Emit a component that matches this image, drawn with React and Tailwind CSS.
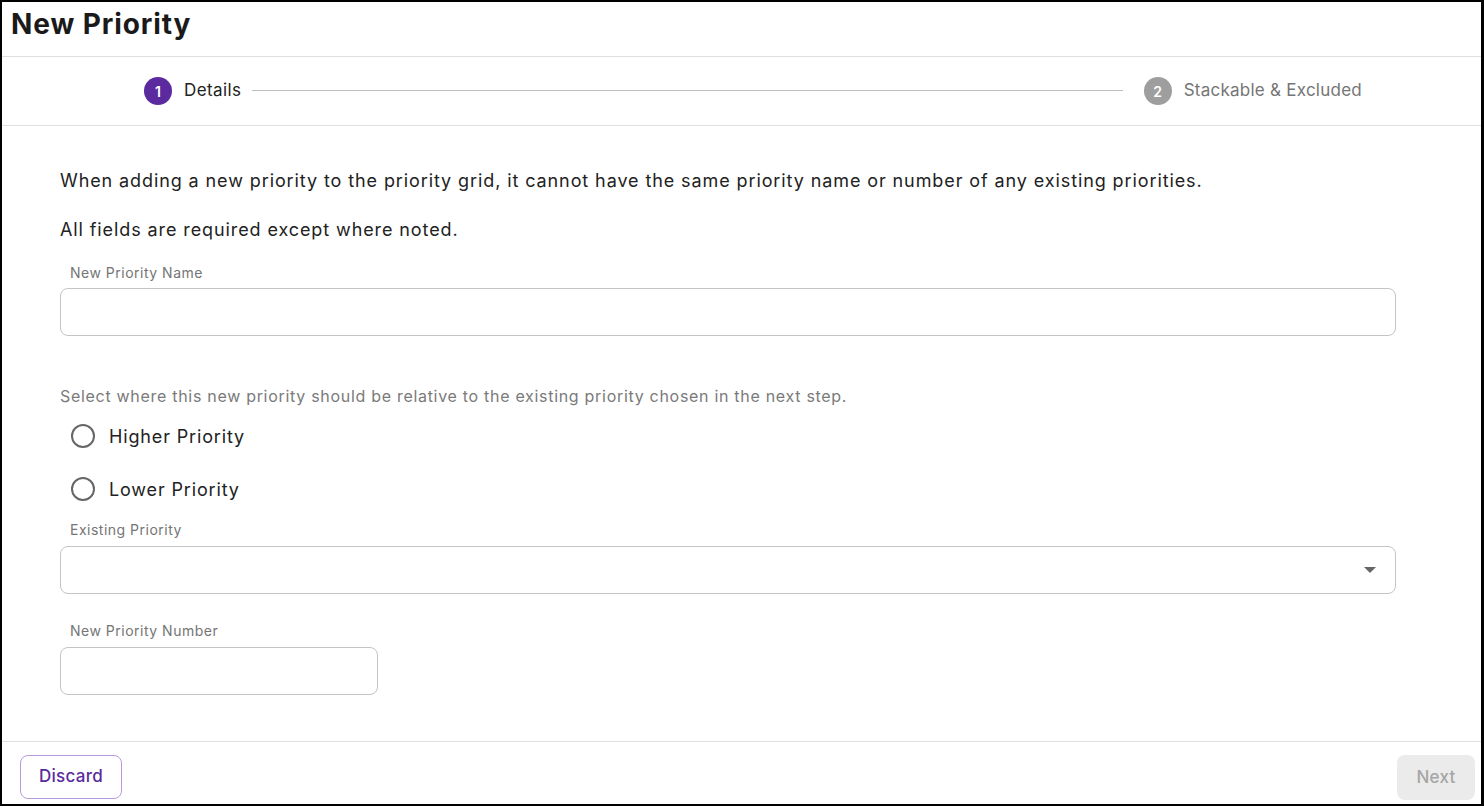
import React, { useState } from 'react';

const FONT = { fontFamily: 'Inter, "Noto Sans", sans-serif' };

function Step({ n, label, active }) {
  return (
    <div className="flex items-center">
      <div
        className={`w-7 h-7 rounded-full flex items-center justify-center text-[14px] font-semibold text-white ${active ? 'bg-[#5b2a9e]' : 'bg-[#9e9e9e]'}`}
      >
        {n}
      </div>
      <span className={`ml-3 text-[17px] ${active ? 'text-[#222] tracking-[0.4px]' : 'text-[#757575] tracking-[0.25px]'}`}>{label}</span>
    </div>
  );
}

function Radio({ label, checked, onClick }) {
  return (
    <label onClick={onClick} className="flex items-center h-[42px] cursor-pointer">
      <span className="ml-[11px] w-6 h-6 rounded-full border-2 border-[#666] flex items-center justify-center">
        {checked && <span className="w-3 h-3 rounded-full bg-[#5b2a9e]" />}
      </span>
      <span className="ml-[14px] text-[18px] tracking-[0.85px] text-[#222]">{label}</span>
    </label>
  );
}

function FieldLabel({ children }) {
  return <div className="ml-[10px] text-[14px] leading-[20px] tracking-[0.5px] text-[#757575]">{children}</div>;
}

export default function App() {
  const [position, setPosition] = useState(null);

  return (
    <div style={FONT} className="h-[806px] w-full border-t-2 border-l-2 border-b-2 border-r-[3px] border-black bg-white flex flex-col">
      {/* header */}
      <div className="h-[55px] border-b border-[#e0e0e0] px-[9px] pt-[4px]">
        <h1 className="text-[28px] font-bold tracking-[0.9px] text-[#1a1a1a] leading-[36px]">New Priority</h1>
      </div>

      {/* stepper */}
      <div className="h-[69px] border-b border-[#e0e0e0] flex items-center pl-[142px] pr-[119px]">
        <Step n="1" label="Details" active />
        <div className="flex-1 h-px bg-[#bdbdbd] ml-[11px] mr-[21px] -mt-[2px]" />
        <Step n="2" label="Stackable & Excluded" />
      </div>

      {/* body */}
      <div className="flex-1 px-[58px] pt-[41px]">
        <p className="text-[18px] leading-[28px] tracking-[0.9px] text-[#222]">
          When adding a new priority to the priority grid, it cannot have the same priority name or number of any existing priorities.
        </p>
        <p className="mt-[21px] text-[18px] leading-[28px] tracking-[0.9px] text-[#222]">All fields are required except where noted.</p>

        <div className="mt-[19px] w-[1336px]">
          <FieldLabel>New Priority Name</FieldLabel>
          <input className="mt-[5px] w-full h-[48px] rounded-lg border border-[#c4c4c4] px-3 text-[16px] outline-none" />
        </div>

        <p className="mt-[48px] text-[16px] leading-[24px] tracking-[0.7px] text-[#7a7a7a]">
          Select where this new priority should be relative to the existing priority chosen in the next step.
        </p>
        <div className="mt-[7px] flex flex-col gap-[11px]">
          <Radio label="Higher Priority" checked={position === 'higher'} onClick={() => setPosition('higher')} />
          <Radio label="Lower Priority" checked={position === 'lower'} onClick={() => setPosition('lower')} />
        </div>

        <div className="mt-[10px] w-[1336px]">
          <FieldLabel>Existing Priority</FieldLabel>
          <div className="mt-[6px] w-full h-[48px] rounded-lg border border-[#c4c4c4] flex items-center justify-end pr-[19px]">
            <svg width="12" height="7" viewBox="0 0 12 7">
              <path d="M0 0 L12 0 L6 6 Z" fill="#666" />
            </svg>
          </div>
        </div>

        <div className="mt-[27px] w-[318px]">
          <FieldLabel>New Priority Number</FieldLabel>
          <input className="mt-[6px] w-full h-[48px] rounded-lg border border-[#c4c4c4] px-3 text-[16px] outline-none" />
        </div>
      </div>

      {/* footer */}
      <div className="h-[63px] border-t border-[#e0e0e0] flex items-start justify-between pl-[18px] pr-[6px] pt-[13px]">
        <button className="h-[44px] w-[102px] rounded-lg border border-[#b79ade] text-[17px] font-medium tracking-[0.3px] text-[#5b2a9e]">
          Discard
        </button>
        <button disabled className="h-[45px] w-[78px] rounded-lg bg-[#ebebeb] text-[17px] font-medium tracking-[0.3px] text-[#a6a6a6]">
          Next
        </button>
      </div>
    </div>
  );
}
